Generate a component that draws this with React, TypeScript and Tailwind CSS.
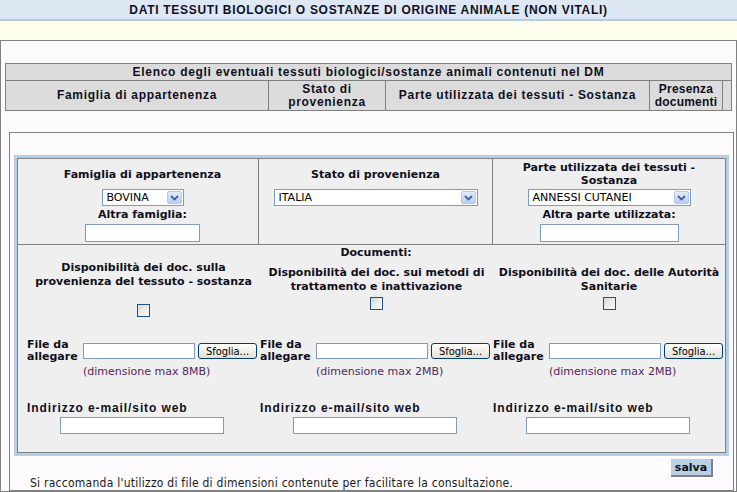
import React from "react";

const V = "font-['DejaVu_Sans','Verdana',sans-serif]";
const T = "font-['Liberation_Sans','Arial',sans-serif] font-bold text-[12px] tracking-[0.7px]";
const TI = "font-['Liberation_Sans','Arial',sans-serif] font-bold text-[12px] tracking-[0.9px]";

function Chevron() {
  return (
    <div className="w-[15px] h-[13px] mr-[1px] rounded-[2px] border border-[#b6c8ef] bg-linear-to-b from-[#e3ebfd] to-[#b9ccf8] flex items-center justify-center shrink-0">
      <svg width="9" height="6" viewBox="0 0 9 6">
        <path d="M1 1 L4.5 4.5 L8 1" fill="none" stroke="#4d6185" strokeWidth="1.8" />
      </svg>
    </div>
  );
}

function Select({ cls, text }: { cls: string; text: string }) {
  return (
    <div className={`h-[17px] border border-[#7f9db9] bg-white flex items-center justify-between pl-[4px] ${cls}`}>
      <span className="text-[11px] leading-none text-black whitespace-nowrap">{text}</span>
      <Chevron />
    </div>
  );
}

function Input({ cls }: { cls: string }) {
  return <div className={`border border-[#7f9db9] bg-white ${cls}`} />;
}

function DocCol({ title, first, size }: { title: React.ReactNode; first?: boolean; size: string }) {
  return (
    <div className="flex flex-col">
      <div className="h-[79px] flex flex-col items-center">
        <div className={`${first ? "mt-[1px]" : "mt-[6px]"} text-center font-bold leading-[14px] whitespace-nowrap`}>{title}</div>
        <div
          className={`${first ? "mt-[15px]" : "mt-[3px]"} w-[13px] h-[13px] border border-[#1c5180] bg-linear-to-br from-[#d8d8d2] to-white`}
        />
      </div>
      <div className="h-[24px] flex items-center">
        <div className="w-[56px] font-bold leading-[12px] whitespace-nowrap">
          File da
          <br />
          allegare
        </div>
        <Input cls="w-[112px] h-[16px]" />
        <div className="ml-[3px] w-[59px] h-[16px] rounded-[3px] border border-[#003c74] bg-linear-to-b from-white to-[#e3e0d2] flex items-center justify-center font-['DejaVu_Sans_Condensed','Liberation_Sans',sans-serif] text-[11px] leading-none text-black">
          Sfoglia...
        </div>
      </div>
      <div className="mt-[2px] pl-[56px] leading-[14px] text-[#52275e] whitespace-nowrap">(dimensione max {size})</div>
      <div className={`mt-[22px] leading-[14px] whitespace-nowrap ${TI}`}>Indirizzo e-mail/sito web</div>
      <Input cls="mt-[2px] ml-[33px] w-[164px] h-[17px]" />
    </div>
  );
}

export default function App() {
  return (
    <div className={`w-[737px] h-[492px] overflow-hidden bg-[#fdfbfd] text-[#10101c] text-[11px] ${V}`}>
      <div className={`h-[21px] bg-[#dde8f4] border-b-2 border-[#b4cce3] flex items-center justify-center leading-none ${T}`}>
        DATI TESSUTI BIOLOGICI O SOSTANZE DI ORIGINE ANIMALE (NON VITALI)
      </div>
      <div className="h-[19px] bg-[#ffffee]" />
      <div className="border border-[#808080] h-[452px]">
        {/* list table */}
        <div className={`mt-[22px] ml-[4px] w-[727px] border border-[#808080] bg-[#dcdcdc] ${T}`}>
          <div className="h-[17px] border-b border-[#808080] flex items-center justify-center leading-none">
            Elenco degli eventuali tessuti biologici/sostanze animali contenuti nel DM
          </div>
          <div className="flex h-[29px] leading-[13px] text-center">
            <div className="w-[263px] border-r border-[#808080] flex items-center justify-center">Famiglia di appartenenza</div>
            <div className="w-[117px] border-r border-[#808080] flex items-center justify-center">
              Stato di
              <br />
              provenienza
            </div>
            <div className="w-[264px] border-r border-[#808080] flex items-center justify-center whitespace-nowrap">
              Parte utilizzata dei tessuti - Sostanza
            </div>
            <div className="w-[73px] border-r border-[#808080] flex items-center justify-center tracking-[0.2px]">
              Presenza
              <br />
              documenti
            </div>
            <div className="flex-1" />
          </div>
        </div>

        {/* inner box */}
        <div className="ml-[8px] mt-[21px] w-[725px] h-[359px] border border-[#808080] pt-[22px] px-[4px]">
          <div className="border-[3px] border-[#b6cfe6]">
            <div className="border border-[#808080] bg-[#efefef]">
              {/* top row */}
              <div className="flex h-[86px] border-b border-[#808080]">
                <div className="w-[241px] border-r border-[#808080] pl-[9px] flex flex-col items-center">
                  <div className="h-[30px] flex items-center justify-center font-bold leading-[13px]">Famiglia di appartenenza</div>
                  <Select cls="w-[82px]" text="BOVINA" />
                  <div className="h-[18px] flex items-center font-bold">Altra famiglia:</div>
                  <Input cls="w-[115px] h-[18px]" />
                </div>
                <div className="w-[234px] border-r border-[#808080] flex flex-col items-center">
                  <div className="h-[30px] flex items-center justify-center font-bold leading-[13px]">Stato di provenienza</div>
                  <Select cls="w-[204px]" text="ITALIA" />
                </div>
                <div className="flex-1 flex flex-col items-center">
                  <div className="h-[30px] flex items-center justify-center text-center font-bold leading-[13px] whitespace-nowrap">
                    Parte utilizzata dei tessuti -
                    <br />
                    Sostanza
                  </div>
                  <Select cls="w-[163px]" text="ANNESSI CUTANEI" />
                  <div className="h-[18px] flex items-center font-bold">Altra parte utilizzata:</div>
                  <Input cls="w-[139px] h-[18px]" />
                </div>
              </div>
              {/* documents */}
              <div className="h-[207px] pt-[1px] pl-[9px]">
                <div className="text-center font-bold leading-[14px]">Documenti:</div>
                <div className="grid grid-cols-[233px_233px_232px]">
                  <DocCol
                    first
                    size="8MB"
                    title={
                      <>
                        Disponibilità dei doc. sulla
                        <br />
                        provenienza del tessuto - sostanza
                      </>
                    }
                  />
                  <DocCol
                    size="2MB"
                    title={
                      <>
                        Disponibilità dei doc. sui metodi di
                        <br />
                        trattamento e inattivazione
                      </>
                    }
                  />
                  <DocCol
                    size="2MB"
                    title={
                      <>
                        Disponibilità dei doc. delle Autorità
                        <br />
                        Sanitarie
                      </>
                    }
                  />
                </div>
              </div>
            </div>
          </div>
          <div className="mt-[3px] flex justify-end mr-[16px]">
            <div className="w-[42px] h-[18px] bg-[#b8cfe6] border-r-2 border-b-2 border-[#808080] flex items-center justify-center font-bold leading-none">
              salva
            </div>
          </div>
          <div className="pl-[16px] leading-[13px] font-['DejaVu_Sans_Condensed','Liberation_Sans',sans-serif] text-[12px] tracking-[0.25px] text-[#1a1a1a] whitespace-nowrap">
            Si raccomanda l'utilizzo di file di dimensioni contenute per facilitare la consultazione.
          </div>
        </div>
      </div>
    </div>
  );
}
